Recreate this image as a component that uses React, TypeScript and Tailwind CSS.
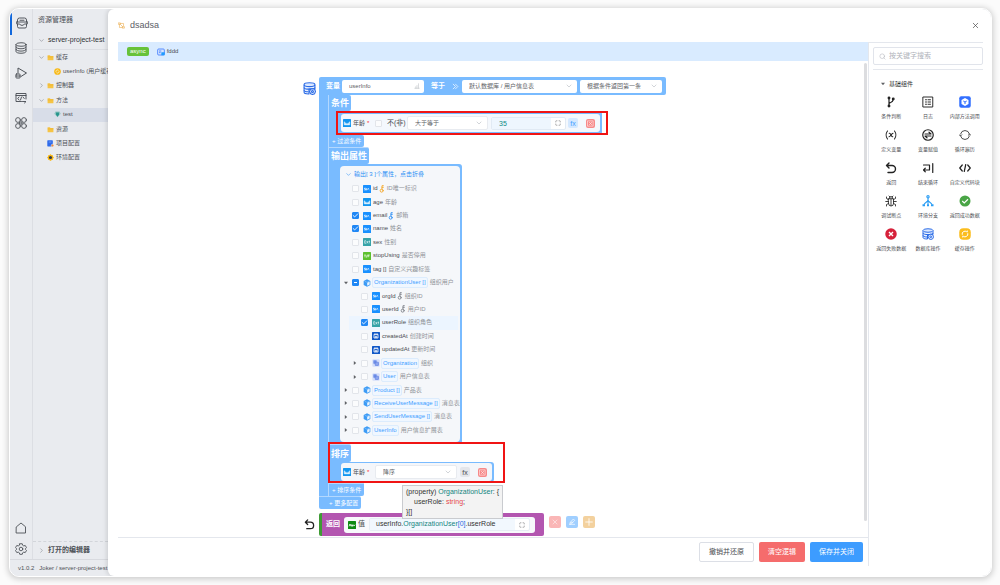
import React from "react";
import { ChevronDown, ChevronRight, Search, X, Maximize, Check } from "lucide-react";

type P = { className?: string };

function Svg({ className = "", children, vb = "0 0 24 24", sw = 2 }: P & { children: React.ReactNode; vb?: string; sw?: number }) {
  return (
    <svg viewBox={vb} className={`shrink-0 ${className}`} fill="none" stroke="currentColor" strokeWidth={sw} strokeLinecap="round" strokeLinejoin="round" aria-hidden="true">
      {children}
    </svg>
  );
}

const Drawer = ({ className }: P) => (
  <Svg className={className} sw={1.9}>
    <path d="M3 10V6a4 4 0 0 1 4-4h10a4 4 0 0 1 4 4v4M8 6.500h8M1.500 10h21M1.500 10v4h6l2 2.500h5l2-2.500h6v-4M3 14v5a3 3 0 0 0 3 3h12a3 3 0 0 0 3-3v-5" />
  </Svg>
);
const Database = ({ className }: P) => (
  <Svg className={className} sw={1.9}>
    <ellipse cx="12" cy="5" rx="10" ry="3.500" />
    <path d="M2 5v14c0 2 4.500 3.500 10 3.500S22 21 22 19V5M2 10c0 2 4.500 3.500 10 3.500S22 12 22 10M2 14.700c0 2 4.500 3.500 10 3.500s10-1.500 10-3.500" />
  </Svg>
);
const Run = ({ className }: P) => (
  <Svg className={className} sw={2}>
    <path d="M6 12V2l17 10-11 7" />
    <rect x="2" y="14" width="8" height="8" rx="1" />
    <path d="M2 18h8" />
  </Svg>
);
const Api = ({ className }: P) => (
  <Svg className={className} sw={1.9}>
    <path d="M22 14V3H2v16h11M2 7h20M8 10l-2.500 3L8 16M16 10l2.500 3M13 10l-2 6M15 19h7l-3 3" />
  </Svg>
);
const Clover = ({ className }: P) => (
  <Svg className={className} sw={1.8}>
    <circle cx="6" cy="6" r="4.800" />
    <circle cx="18" cy="6" r="4.800" />
    <circle cx="6" cy="18" r="4.800" />
    <circle cx="18" cy="18" r="4.800" />
    <path d="M10 10h4v4h-4z" />
  </Svg>
);
const Gear = ({ className }: P) => (
  <Svg className={className} sw={1.8}>
    <circle cx="12" cy="12" r="3.600" />
    <path d="M9.500 1.500h5l.8 3 2.200 1.300 3-.8 2.500 4.300-2.200 2.200v1.200l2.200 2.200-2.500 4.200-3-.8-2.200 1.300-.8 3h-5l-.8-3-2.200-1.300-3 .8L1 14.900l2.200-2.200v-1.200L1 9.300 3.500 5l3 .8 2.200-1.300z" />
  </Svg>
);
const Folder = ({ className }: P) => (
  <svg viewBox="0 0 24 24" className={`shrink-0 ${className}`} aria-hidden="true">
    <path d="M2 4h8l2 3h10v14H2z" fill="#f6c445" />
    <path d="M2 10h20" stroke="#e7ab1f" strokeWidth="1.500" />
  </svg>
);
const Coin = ({ className }: P) => (
  <svg viewBox="0 0 24 24" className={`shrink-0 ${className}`} aria-hidden="true">
    <circle cx="12" cy="12" r="11.500" fill="#f7b917" />
    <path d="M6.500 13a5.500 5.500 0 0 1 9-5M17.500 11a5.500 5.500 0 0 1-9 5" stroke="#fff" strokeWidth="2.200" fill="none" />
  </svg>
);
const Gem = ({ className }: P) => (
  <svg viewBox="0 0 24 24" className={`shrink-0 ${className}`} aria-hidden="true">
    <path d="M5 2h14l4 7-11 12L1 9z" fill="#8fc4c0" />
    <path d="M7 5h10v8l-5 7-5-7z" fill="#27948c" />
  </svg>
);
const ProjectConf = ({ className }: P) => (
  <svg viewBox="0 0 24 24" className={`shrink-0 ${className}`} aria-hidden="true">
    <rect x="1" y="1" width="19" height="21" rx="2" fill="#2f6bea" />
    <path d="M6 7h9" stroke="#9dbcff" strokeWidth="2" />
    <circle cx="19" cy="19" r="4.500" fill="#f08c3a" stroke="#fff" strokeWidth="1.500" />
  </svg>
);
const EnvConf = ({ className }: P) => (
  <svg viewBox="0 0 24 24" className={`shrink-0 ${className}`} aria-hidden="true">
    <path d="m12 0 3 3 5 1 1 5 3 3-3 3-1 5-5 1-3 3-3-3-5-1-1-5-3-3 3-3 1-5 5-1z" fill="#fbb914" />
    <circle cx="12" cy="12" r="5.500" fill="#333b4a" />
  </svg>
);
const Flow = ({ className }: P) => (
  <Svg className={className} sw={2.2}>
    <path d="M2 3h6v5H2zM16 16h6v5h-6zM8 5h11v8M5 8v11h11M8 8l8 8" />
  </Svg>
);
const Card = ({ className }: P) => (
  <svg viewBox="0 0 24 24" className={`shrink-0 ${className}`} aria-hidden="true">
    <rect x="2" y="3" width="20" height="18" rx="3" fill="#d8e6ff" stroke="#3d7bff" strokeWidth="2.500" />
    <path d="M6 9h7M6 14h5" stroke="#3d7bff" strokeWidth="2.500" />
    <path d="M13 13h10v9H13z" fill="#1f9bff" />
  </svg>
);
const DbGear = ({ className }: P) => (
  <svg viewBox="0 0 24 24" className={`shrink-0 ${className}`} fill="none" stroke="#2b6be6" strokeWidth="2" strokeLinejoin="round" aria-hidden="true">
    <path d="M2 5v14c0 1.800 3.500 3 8 3h1V13h11V5" fill="#eaf2ff" />
    <ellipse cx="12" cy="5" rx="10" ry="3.500" fill="#dbe8ff" />
    <path d="M2 10c0 1.800 4 3.200 10 3.200S22 11.800 22 10M2 15c0 1.500 3 2.800 8 3" />
    <path d="m14 13.500 3.500-1.200 4 1.200 1.500 4-1.500 4-4 1.500-3.500-1.500-2-4z" fill="#eaf2ff" />
    <circle cx="17.500" cy="17.500" r="1.800" />
  </svg>
);
const Back = ({ className }: P) => (
  <Svg className={className} sw={2.8}>
    <path d="M8 2 3 7l5 5M3 7h11a7 7 0 0 1 0 14H6" />
  </Svg>
);
const Branch = ({ className }: P) => (
  <Svg className={className} sw={2.4}>
    <path d="M8 5v15M8 16c0-4 8-2 8-8" />
    <circle cx="8" cy="4" r="1.700" fill="currentColor" />
    <circle cx="8" cy="20" r="1.700" fill="currentColor" />
    <circle cx="16.500" cy="6" r="1.700" fill="currentColor" />
  </Svg>
);
const Log = ({ className }: P) => (
  <Svg className={className} sw={1.9}>
    <path d="M2.500 2h19v20h-19zM7 7.500h2M12 7.500h5M7 12h2M12 12h5M7 16.500h2M12 16.500h5" />
  </Svg>
);
const Cube = ({ className }: P) => (
  <svg viewBox="0 0 24 24" className={`shrink-0 ${className}`} aria-hidden="true">
    <rect x=".5" y=".5" width="23" height="23" rx="4" fill="#3370ff" />
    <path d="m12 4 7 4v8l-7 4-7-4V8z" fill="#fff" />
    <path d="M8.500 10 12 12l3.500-2M12 12v4" stroke="#3370ff" strokeWidth="2" fill="none" />
  </svg>
);
const VarX = ({ className }: P) => (
  <Svg className={className} sw={2.2}>
    <path d="M5 4C1.500 8.500 1.500 15.500 5 20M19 4c3.500 4.500 3.500 11.500 0 16M8.500 8.500c3.500-1 3.500 8 7 7M16 8.500c-3 0-5 7-8 7" />
  </Svg>
);
const Assign = ({ className }: P) => (
  <Svg className={className} sw={2.4}>
    <circle cx="12" cy="12" r="10.500" />
    <path d="M6 10h12l-4-3.500M18 14H6l4 3.500" />
  </Svg>
);
const Loop = ({ className }: P) => (
  <Svg className={className} sw={1.6}>
    <path d="M3 10a9.300 9.300 0 0 1 18 0M21 14a9.300 9.300 0 0 1-18 0M.5 11.500 3 14l2.500-2.500M18.500 12.500 21 10l2.500 2.500" />
  </Svg>
);
const LoopEnd = ({ className }: P) => (
  <Svg className={className} sw={2.4}>
    <path d="M3 6h12v10H3M6.500 12.500 3 16l3.500 3.500M21.500 3v18" />
  </Svg>
);
const CodeIc = ({ className }: P) => (
  <Svg className={className} sw={2.4}>
    <path d="m6.500 6-5 6 5 6M17.500 6l5 6-5 6M13.500 5l-3 14" />
  </Svg>
);
const Bug = ({ className }: P) => (
  <Svg className={className} sw={1.7}>
    <path d="M7 7.500h10V17a5 5 0 0 1-10 0zM8.500 7a3.500 4 0 0 1 7 0M12 8v13M7 13H1.500M22.500 13H17M7 9 3 7V4M17 9l4-2V4M7 17l-4 2v3M17 17l4 2v3M8 2l2 2M16 2l-2 2" />
  </Svg>
);
const Net = ({ className }: P) => (
  <svg viewBox="0 0 24 24" className={`shrink-0 ${className}`} fill="none" stroke="#2a9df4" strokeWidth="2.200" aria-hidden="true">
    <circle cx="12" cy="3.500" r="2.300" />
    <path d="M12 6v13M12 9c0 5-5 5-8 10M12 9c0 5 5 5 8 10" />
    <path d="M1 18.500h5v4H1zM10 18.500h4v4h-4zM18 18.500h5v4h-5z" fill="#2a9df4" stroke="none" />
  </svg>
);
const Ok = ({ className }: P) => (
  <svg viewBox="0 0 24 24" className={`shrink-0 ${className}`} fill="none" stroke="#fff" strokeWidth="2.200" aria-hidden="true">
    <circle cx="12" cy="12" r="11" fill="#4aa546" stroke="none" />
    <path d="m6.500 12 4 4 7.500-7.500" />
  </svg>
);
const Fail = ({ className }: P) => (
  <svg viewBox="0 0 24 24" className={`shrink-0 ${className}`} fill="none" stroke="#fff" strokeWidth="2.800" aria-hidden="true">
    <circle cx="12" cy="12" r="11.500" fill="#d6213a" stroke="none" />
    <path d="m8 8 8 8M16 8l-8 8" />
  </svg>
);
const CacheIc = ({ className }: P) => (
  <svg viewBox="0 0 24 24" className={`shrink-0 ${className}`} fill="none" stroke="#fff" strokeWidth="2" aria-hidden="true">
    <rect x=".5" y=".5" width="23" height="23" rx="8" fill="#fbbd1e" stroke="none" />
    <path d="M6.500 13.500a5.700 5.700 0 0 1 9-6M17.500 10.500a5.700 5.700 0 0 1-9 6M16.500 5v3.500M7.500 19v-3.500" />
  </svg>
);
const KeyIc = ({ className }: P) => (
  <Svg className={className} sw={2.6} vb="0 0 16 24">
    <circle cx="7" cy="17" r="4.500" />
    <path d="M8 12.500V2h4M8 7h4" />
  </Svg>
);
const Block3d = ({ className }: P) => (
  <svg viewBox="0 0 24 24" className={`shrink-0 ${className}`} aria-hidden="true">
    <path d="m12 1 10 5v12l-10 5-10-5V6z" fill="#3c9bf5" />
    <path d="m12.500 11 7.500-3.500v9l-7.500 4z" fill="#e8f4ff" />
    <path d="M5 6.500 12 10l7-3.500" stroke="#a9d5ff" strokeWidth="1.500" fill="none" />
  </svg>
);
const Rel = ({ className }: P) => (
  <svg viewBox="0 0 24 24" className={`shrink-0 ${className}`} aria-hidden="true">
    <rect x="1" y="1" width="22" height="22" rx="3" fill="#d3defa" />
    <rect x="4" y="4" width="10" height="10" rx="1" fill="#6f8fe8" />
    <rect x="9.500" y="9.500" width="10" height="10" rx="1" fill="#8ba5ee" stroke="#4c70dc" strokeWidth="1.500" />
  </svg>
);

type Kind = "str" | "int" | "enum" | "bool" | "date" | "any";
function TypeIcon({ kind }: { kind: Kind }) {
  const fill = { str: "#1890ff", int: "#1296f0", enum: "#36a3a8", bool: "#5cc02e", date: "#1158c7", any: "#0f8a12" }[kind];
  return (
    <svg viewBox="0 0 24 24" className="size-2 shrink-0" fill="none" stroke="#fff" strokeWidth="2" aria-hidden="true">
      <rect width="24" height="24" rx="1.500" fill={fill} stroke="none" />
      {kind === "str" && <path d="M8 9.500H4.500V12H8v3H4M10 9v6h2.500M14.500 15v-4H18M20 15h1.500" />}
      {kind === "int" && <path d="M4 8v9h16V8M8 17v-6M12 17v-5M16 17v-6" strokeWidth="2.600" />}
      {kind === "enum" && <path d="M9 8H5v8h4M5 12h3M11 9l4 7M15 9l-4 7M19 8v8M17 10h4" strokeWidth="1.600" />}
      {kind === "bool" && <path d="M3.500 9h5M6 9v7M13 8l-3 9M20 9h-5v7M15 12h4" />}
      {kind === "date" && <path d="M6 7h12v11H6zM9 4v5M15 4v5M10 18v-5h4v5" strokeWidth="2.400" />}
      {kind === "any" && <path d="m3 16 3-7 3 7M11 16v-5l3 5v-5M16 11l2 4 3-4" strokeWidth="2.400" />}
    </svg>
  );
}

function Box({ checked = false, partial = false, label }: { checked?: boolean; partial?: boolean; label: string }) {
  return (
    <span className="grid size-[7px] shrink-0">
      <input type="checkbox" defaultChecked={checked || partial} aria-label={label} className="col-start-1 row-start-1 size-[7px] appearance-none rounded-[1px] border border-[#e2e5ea] bg-[#fbfcfd] checked:border-[#1f87f5] checked:bg-[#1f87f5]" />
      {checked && <Check className="pointer-events-none col-start-1 row-start-1 size-[7px] text-white" strokeWidth={3} />}
      {partial && <span className="pointer-events-none col-start-1 row-start-1 mx-[2px] my-[3px] bg-white" />}
    </span>
  );
}

function Pick({ label, value, className }: { label: string; value: string; className: string }) {
  return (
    <span className={`grid items-center rounded-[2px] bg-white ${className}`}>
      <select aria-label={label} className="col-start-1 row-start-1 h-full w-full appearance-none bg-transparent px-[7px] text-[6px] text-[#606266]">
        <option>{value}</option>
      </select>
      <ChevronDown className="pointer-events-none col-start-1 row-start-1 mr-[4px] size-2 justify-self-end text-[#b4b8bf]" strokeWidth={1.8} />
    </span>
  );
}

type Node = {
  name: string;
  desc: string;
  kind?: Kind;
  keyColor?: string;
  checked?: boolean;
  partial?: boolean;
  child?: boolean;
  rel?: "list" | "one";
  open?: boolean;
  active?: boolean;
};

const nodes: Node[] = [
  { name: "id", desc: "ID唯一标识", kind: "str", keyColor: "text-[#f5a623]" },
  { name: "age", desc: "年龄", kind: "int" },
  { name: "email", desc: "邮箱", kind: "str", keyColor: "text-[#2b8ff5]", checked: true },
  { name: "name", desc: "姓名", kind: "str", checked: true },
  { name: "sex", desc: "性别", kind: "enum" },
  { name: "stopUsing", desc: "是否停用", kind: "bool" },
  { name: "tag []", desc: "自定义兴趣标签", kind: "str" },
  { name: "OrganizationUser []", desc: "组织用户", rel: "list", partial: true, open: true },
  { name: "orgId", desc: "组织ID", kind: "str", keyColor: "text-[#7c8088]", child: true },
  { name: "userId", desc: "用户ID", kind: "str", keyColor: "text-[#7c8088]", child: true },
  { name: "userRole", desc: "组织角色", kind: "enum", checked: true, child: true, active: true },
  { name: "createdAt", desc: "创建时间", kind: "date", child: true },
  { name: "updatedAt", desc: "更新时间", kind: "date", child: true },
  { name: "Organization", desc: "组织", rel: "one", child: true },
  { name: "User", desc: "用户信息表", rel: "one", child: true },
  { name: "Product []", desc: "产品表", rel: "list" },
  { name: "ReceiveUserMessage []", desc: "消息表", rel: "list" },
  { name: "SendUserMessage []", desc: "消息表", rel: "list" },
  { name: "UserInfo", desc: "用户信息扩展表", rel: "list" },
];

function Caret({ open = false }: { open?: boolean }) {
  return (
    <svg viewBox="0 0 10 10" className="size-1 shrink-0" aria-hidden="true">
      <path d={open ? "M0 2h10L5 8z" : "M2 0v10l6-5z"} fill="#606266" />
    </svg>
  );
}

function TreeRow({ n }: { n: Node }) {
  return (
    <li className={`ml-[9px] mr-[2px] flex items-center whitespace-nowrap text-[6px] leading-[9px] ${n.active ? "bg-[#ecf5ff]" : ""} ${n.child ? "pl-[4px]" : ""}`}>
      <span className={`flex w-2 shrink-0 ${n.child ? "ml-0" : "-ml-[5px]"}`}>{n.rel && <Caret open={n.open} />}</span>
      <Box checked={n.checked} partial={n.partial} label={n.name} />
      <span className="ml-1 flex">
        {n.kind && <TypeIcon kind={n.kind} />}
        {n.rel === "list" && <Block3d className="size-2" />}
        {n.rel === "one" && <Rel className="size-2" />}
      </span>
      {n.rel ? (
        <span className="ml-px rounded-[2px] border border-[#dcecfd] bg-[#f0f7ff] px-px text-[#409eff]">{n.name}</span>
      ) : (
        <span className="ml-[2px] text-[#4a4d52]">{n.name}</span>
      )}
      {n.keyColor && <KeyIc className={`ml-px h-2 w-[6px] ${n.keyColor}`} />}
      <span className="ml-[2px] text-[#909399]">{n.desc}</span>
    </li>
  );
}

function Heading({ children, className = "" }: { children: React.ReactNode; className?: string }) {
  return <h3 className={`w-fit rounded-r-[2px] bg-[#79bbff] px-[2px] text-[9px] font-bold leading-4 text-white ${className}`}>{children}</h3>;
}

function AddButton({ children, className = "" }: { children: React.ReactNode; className?: string }) {
  return <button className={`block w-fit rounded-r-[2px] bg-[#79bbff] px-[3px] text-[6px] leading-3 text-white ${className}`}>{children}</button>;
}

function Fx({ className }: P) {
  return <button className={`size-[10px] rounded-[2px] text-[7px] leading-[9px] ${className}`}>fx</button>;
}

function Remove() {
  return (
    <button aria-label="删除" className="grid size-[9px] place-items-center rounded-[2px] bg-[#f78989] text-white">
      <Svg className="size-[7px]" sw={1.8}>
        <path d="M3 3h18v18H3zM8 8l8 8M16 8l-8 8" />
      </Svg>
    </button>
  );
}

function FieldName() {
  return (
    <span className="ml-[2px] flex w-[22px] items-center gap-[2px] text-[6px]">
      年龄 <span className="text-red-500">*</span>
    </span>
  );
}

function Explorer() {
  const items = [
    { t: "缓存", icon: <Folder className="size-[7px]" />, arrow: "down" },
    { t: "userInfo (用户缓存)", icon: <Coin className="size-[7px]" />, sub: true },
    { t: "控制器", icon: <Folder className="size-[7px]" />, arrow: "right" },
    { t: "方法", icon: <Folder className="size-[7px]" />, arrow: "down" },
    { t: "test", icon: <Gem className="size-[7px]" />, sub: true, active: true },
    { t: "资源", icon: <Folder className="size-[7px]" /> },
    { t: "项目配置", icon: <ProjectConf className="size-[7px]" /> },
    { t: "环境配置", icon: <EnvConf className="size-[7px]" /> },
  ];
  return (
    <aside className="flex w-[98px] shrink-0 flex-col bg-[#e9ebef] text-[7px] text-[#4d5157]">
      <div className="flex flex-1">
        <nav className="flex w-[23px] shrink-0 flex-col items-center border-r border-[#dcdee3] pt-[2px]">
          <button aria-label="资源管理器" className="grid h-[24px] w-full place-items-center border-l-2 border-[#1268dc]"><Drawer className="size-3" /></button>
          <button aria-label="数据库" className="grid h-[25px] w-full place-items-center"><Database className="size-3" /></button>
          <button aria-label="运行" className="grid h-[25px] w-full place-items-center"><Run className="size-3" /></button>
          <button aria-label="接口" className="grid h-[25px] w-full place-items-center"><Api className="size-3" /></button>
          <button aria-label="插件" className="grid h-[25px] w-full place-items-center"><Clover className="size-3" /></button>
          <button aria-label="主页" className="mt-auto grid h-[21px] w-full place-items-center"><Svg className="size-3" sw={1.8}><path d="M3 9.500 12 2l9 7.500V22H3z" /></Svg></button>
          <button aria-label="设置" className="grid h-[21px] w-full place-items-center"><Gear className="size-3" /></button>
        </nav>
        <div className="flex min-w-0 flex-1 flex-col overflow-hidden">
          <h2 className="px-[5px] text-[7px] leading-[22px]">资源管理器</h2>
          <div className="flex h-[19px] items-center gap-[3px] whitespace-nowrap border-b border-[#dcdee3] pl-[5px]">
            <ChevronDown className="size-[7px] shrink-0 text-[#7b7f86]" strokeWidth={1.8} />
            <span className="text-[7px] text-[#2f3237]">server-project-test</span>
          </div>
          <ul className="grid h-[115px] auto-rows-fr text-[6px]">
            {items.map((it) => (
              <li key={it.t} className={`flex items-center gap-[2px] whitespace-nowrap pl-[5px] ${it.active ? "bg-[#d8dde8]" : ""}`}>
                <span className={it.sub ? "w-[14px] shrink-0" : "w-[7px] shrink-0"}>
                  {it.arrow === "down" && <ChevronDown className="size-[7px] text-[#7b7f86]" strokeWidth={1.8} />}
                  {it.arrow === "right" && <ChevronRight className="size-[7px] text-[#7b7f86]" strokeWidth={1.8} />}
                </span>
                {it.icon}
                <span>{it.t}</span>
              </li>
            ))}
          </ul>
          <div className="mt-auto flex h-[18px] items-center gap-[3px] border-t border-dashed border-[#d2d5da] pl-[5px] font-bold">
            <ChevronRight className="size-[7px] text-[#7b7f86]" strokeWidth={1.8} />
            <span>打开的编辑器</span>
          </div>
        </div>
      </div>
      <footer className="flex h-[17px] items-center gap-[5px] overflow-hidden whitespace-nowrap border-t border-[#d8dadf] pl-2 text-[6px]">
        <span>v1.0.2</span>
        <span>Joker / server-project-test</span>
      </footer>
    </aside>
  );
}

function QueryBlock() {
  return (
    <div className="flex items-start gap-[3px]">
      <DbGear className="mt-[5px] size-[13px]" />
      <div>
        <div className="flex h-[18px] w-fit items-center rounded-t-[2px] rounded-r-[2px] bg-[#79bbff] pl-[7px] pr-1 text-[7px] font-bold text-white">
          <label htmlFor="v" className="w-4">变量</label>
          <span className="flex h-[13px] w-[82px] items-center rounded-[2px] bg-white pr-1">
            <input id="v" defaultValue="userInfo" className="min-w-0 flex-1 pl-[7px] text-[6px] font-normal text-[#606266] outline-none" />
            <Svg className="size-[6px] text-[#b4b8bf]"><path d="M3 21h18M7 21v-6M12 21V10M18 21V3" /></Svg>
          </span>
          <span className="ml-[7px]">等于</span>
          <Svg className="ml-[7px] size-[7px]" sw={2.4}><path d="m4 4 8 8-8 8M12 4l8 8-8 8" /></Svg>
          <Pick label="数据表" value="默认数据库 / 用户信息表" className="ml-[3px] h-[13px] w-[115px] font-normal" />
          <Pick label="返回方式" value="根据条件返回第一条" className="ml-[3px] h-[13px] w-[82px] font-normal" />
        </div>
        <div className="flex">
          <div className="w-[10px] shrink-0 border-r border-[#b3d8ff] bg-[#79bbff]" />
          <div>
            <section>
              <Heading>条件</Heading>
              <div className="relative flex h-6">
                <div className="w-[9px] bg-[#79bbff]" />
                <div className="rounded-r-[3px] bg-[#79bbff] py-[3px] pl-[3px] pr-[2px]">
                  <div className="flex h-[18px] items-center rounded-[3px] bg-[#f4f8fd] pl-[2px] pr-[5px] text-[7px] text-[#4a4d52]">
                    <TypeIcon kind="int" />
                    <FieldName />
                    <Box label="不(非)" />
                    <span className="ml-[5px] w-5">不(非)</span>
                    <Pick label="运算符" value="大于等于" className="h-[14px] w-[81px] border border-[#e8ebf0]" />
                    <span className="ml-[3px] flex h-[13px] w-[75px] items-center rounded-[2px] border border-[#e1eaf4] bg-white">
                      <input aria-label="值" defaultValue="35" className="h-full min-w-0 flex-1 bg-[#eef6fe] pl-[7px] text-[7px] text-[#0f8b85] outline-none" />
                      <Maximize className="mx-1 size-[6px] text-[#606266]" />
                    </span>
                    <span className="ml-[2px] mr-[8px] flex"><Fx className="bg-[#d4e8ff] text-[#409eff]" /></span>
                    <Remove />
                  </div>
                </div>
                <div className="pointer-events-none absolute -right-[6px] bottom-0 left-[7px] top-0 border-2 border-[#f01414]" />
              </div>
              <AddButton>+ 过滤条件</AddButton>
            </section>
            <section>
              <Heading className="border-t border-[#b3d8ff]">输出属性</Heading>
              <div className="flex w-fit rounded-r-[3px] bg-[#79bbff] py-[2px] pl-[11px] pr-[2px]">
                <div className="h-[276px] w-[120px] rounded-[4px] bg-[#f5f7fa]">
                  <button className="flex h-4 items-center gap-[2px] pl-[5px] text-[6px] text-[#2d8ff5]">
                    <ChevronDown className="size-[7px]" strokeWidth={1.8} />
                    输出[ 3 ]个属性，点击折叠
                  </button>
                  <ul className="grid h-[255px] auto-rows-fr grid-cols-1">
                    {nodes.map((n) => <TreeRow key={n.name} n={n} />)}
                  </ul>
                </div>
              </div>
            </section>
            <section className="relative">
              <Heading className="border-t border-[#b3d8ff] pt-px">排序</Heading>
              <div className="flex">
                <div className="rounded-r-[3px] bg-[#79bbff] py-px pl-[12px] pr-[2px]">
                  <div className="flex h-[18px] items-center rounded-[3px] bg-[#f4f6fa] pl-[2px] pr-[5px] text-[7px] text-[#4a4d52]">
                    <TypeIcon kind="int" />
                    <FieldName />
                    <Pick label="排序方式" value="降序" className="h-[14px] w-[82px] border border-[#e8ebf0]" />
                    <span className="ml-[3px] mr-[8px] flex"><Fx className="bg-[#e4e6eb] text-[#4a4d52]" /></span>
                    <Remove />
                  </div>
                </div>
              </div>
              <AddButton className="border-t-2 border-[#b3d8ff]">+ 排序条件</AddButton>
              <div className="pointer-events-none absolute -left-px -top-[2px] h-[41px] w-[177px] border-2 border-[#f01414]" />
              <div role="tooltip" className="absolute left-[73px] top-[41px] z-10 whitespace-pre border border-[#c9cbcf] bg-[#f3f3f3] px-[3px] py-px text-[7px] leading-[10px] text-[#333]">
                <div>(property) <span className="text-[#12857f]">OrganizationUser</span>: {"{"}</div>
                <div className="pl-2">userRole: <span className="text-[#e5484d]">string</span>;</div>
                <div>{"}[]"}</div>
              </div>
            </section>
          </div>
        </div>
        <AddButton className="rounded-b-[2px] border-t border-[#b3d8ff] pl-[10px]">+ 更多配置</AddButton>
      </div>
    </div>
  );
}

function ReturnBlock() {
  return (
    <div className="mt-1 flex items-center gap-[3px]">
      <Back className="size-[13px] p-px text-[#222]" />
      <div className="flex h-[23px] items-center rounded-[2px] border-l-[3px] border-[#3f9b35] bg-[#b356b0] pl-1 pr-[9px] text-[7px] text-white">
        <span className="w-[18px] font-bold">返回</span>
        <div className="flex h-4 items-center rounded-[3px] bg-[#f8f9fc] pl-1 pr-[5px] text-[#4a4d52]">
          <TypeIcon kind="any" />
          <span className="ml-[2px]">值</span>
          <span className="ml-1 flex h-[13px] w-[161px] items-center rounded-[2px] border border-[#e6edf5] bg-white">
            <span role="textbox" aria-label="值" className="flex h-full flex-1 items-center bg-[#f2f8fe] pl-[6px] text-[7px] text-[#333]">
              userInfo.<span className="text-[#12857f]">OrganizationUser</span><span className="text-[#2d6be0]">[0]</span>.userRole
            </span>
            <Maximize className="mx-[4px] size-[6px] text-[#606266]" />
          </span>
        </div>
      </div>
      <div className="ml-[2px] flex gap-[5px] pb-[6px] text-white">
        <button aria-label="删除" className="grid size-3 place-items-center rounded-[2px] bg-[#fab6b6]"><X className="size-2" strokeWidth={1.5} /></button>
        <button aria-label="编辑" className="grid size-3 place-items-center rounded-[2px] bg-[#a0cfff]"><Svg className="size-2"><path d="m5 19 2-6L16 3l4 4-9 10-6 2h15M8 13h6" /></Svg></button>
        <button aria-label="移动" className="grid size-3 place-items-center rounded-[2px] bg-[#f3d19e]"><Svg className="size-2" sw={2.5}><path d="M12 2v20M2 12h20" /></Svg></button>
      </div>
    </div>
  );
}

const tools: [string, (p: P) => React.ReactElement][] = [
  ["条件判断", Branch], ["日志", Log], ["内部方法调用", Cube],
  ["定义变量", VarX], ["变量赋值", Assign], ["循环遍历", Loop],
  ["返回", Back], ["结束循环", LoopEnd], ["自定义代码块", CodeIc],
  ["调试断点", Bug], ["环境分支", Net], ["返回成功数据", Ok],
  ["返回失败数据", Fail], ["数据库操作", DbGear], ["缓存操作", CacheIc],
];

function Palette() {
  return (
    <aside className="w-[115px] shrink-0 border-l border-t border-[#e4e7ed] pl-1">
      <label className="mt-1 flex h-[18px] items-center gap-[3px] rounded-[2px] border border-[#e1e4eb] px-[5px]">
        <Search className="size-[7px] text-[#b0b3ba]" strokeWidth={1.8} />
        <input placeholder="按关键字搜索" aria-label="按关键字搜索" className="min-w-0 flex-1 text-[7px] outline-none placeholder:text-[#b0b3ba]" />
      </label>
      <h2 className="mt-1 flex items-center gap-1 border-t border-[#e4e7ed] pl-2 pt-2 text-[6px] leading-3 text-[#303133]">
        <Caret open />
        基础组件
      </h2>
      <ul className="mt-[5px] grid grid-cols-3">
        {tools.map(([t, Icon]) => (
          <li key={t} className="h-[33px]">
            <button className="flex w-full flex-col items-center gap-[4px] pt-px text-[#222]">
              <Icon className="size-3" />
              <span className="whitespace-nowrap text-[5px] leading-2 text-[#4a4d52]">{t}</span>
            </button>
          </li>
        ))}
      </ul>
    </aside>
  );
}

export default function App() {
  return (
    <div className="flex min-h-screen bg-[#fbfbfb] pb-2 pl-[9px] pr-2 pt-2 font-['Liberation_Sans','Noto_Sans_CJK_SC',sans-serif]">
      <div className="flex min-w-0 flex-1 overflow-hidden rounded-[10px] border border-white bg-[#e9ebef] shadow-[0_1px_6px_1px_rgba(0,0,0,0.2)]">
        <Explorer />
        <main className="z-10 flex min-w-0 flex-1 flex-col rounded-l-[6px] bg-white pb-[10px] pl-[10px] pr-2 shadow-[-1px_0_5px_rgba(0,0,0,0.14)]">
          <header className="flex h-[33px] items-center gap-[5px]">
            <Flow className="size-[7px] text-[#edb35a]" />
            <h1 className="flex-1 text-[9px] text-[#5c6066]">dsadsa</h1>
            <button aria-label="关闭" className="mr-[3px] text-[#444]"><X className="size-[9px]" strokeWidth={1.8} /></button>
          </header>
          <div className="flex flex-1">
            <div className="flex min-w-0 flex-1 flex-col">
              <div className="flex h-[19px] items-center bg-[#d9ebff] pl-[9px] text-[6px] text-[#4a4d52]">
                <span className="rounded-[2px] bg-[#67c23a] px-[3px] leading-[9px] text-white">async</span>
                <Card className="ml-2 size-2" />
                <span className="ml-[2px]">fddd</span>
              </div>
              <div className="flex flex-1 pt-[2px]">
                <div className="flex-1 pl-[185px] pt-[14px]">
                  <QueryBlock />
                  <ReturnBlock />
                </div>
                <div className="mb-4 mr-px w-[3px] rounded-[2px] bg-[#dcdde0]" />
              </div>
              <div className="flex h-[29px] items-start justify-end gap-[5px] border-t border-[#e4e7ed] pr-[5px] pt-1 text-[7px]">
                <button className="h-5 rounded-[2px] border border-[#dcdfe6] px-[9px] text-[#4a4d52]">撤销并还原</button>
                <button className="h-5 rounded-[2px] bg-[#f56c6c] px-[9px] text-white">清空逻辑</button>
                <button className="h-5 rounded-[2px] bg-[#3d9cff] px-[9px] text-white">保存并关闭</button>
              </div>
            </div>
            <Palette />
          </div>
        </main>
      </div>
    </div>
  );
}
